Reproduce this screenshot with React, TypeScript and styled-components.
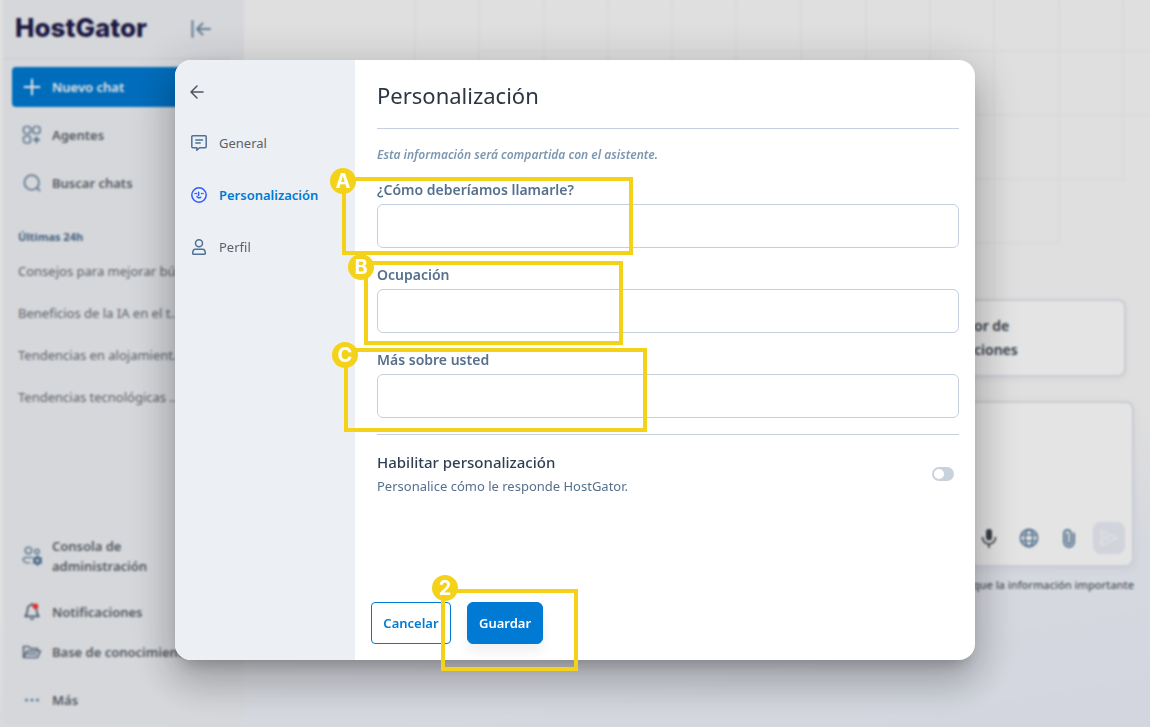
import React from "react";
import styled, { createGlobalStyle } from "styled-components";

const GlobalStyle = createGlobalStyle`
  *, *::before, *::after { box-sizing: border-box; }
  html, body { margin: 0; }
  body {
    font-family: "Noto Sans", "Open Sans", sans-serif;
    font-size: 13px;
    color: #4a5560;
    background: #fafafa;
  }
  button, input { font: inherit; }
  button { cursor: pointer; }
  h1, h2, h3, p, ul { margin: 0; padding: 0; }
  ul { list-style: none; }
`;

const blue = "#007ad3";
const marker = "#f4d219";

/* ---------- Page behind the dialog ---------- */

const Page = styled.div`
  position: relative;
  display: flex;
  min-height: 100vh;
  padding: 0 0 2px 3px;
  overflow: hidden;
  background: linear-gradient(170deg, #fafafa 0%, #fafafa 66%, #f1f3fa 78%, #ecf0fa 100%);
`;

const GridLines = styled.svg`
  position: absolute;
  top: 0;
  right: 0;
  stroke: #f4f4f4;
  stroke-width: 2;
  fill: none;
`;

const Sidebar = styled.aside`
  position: relative;
  display: flex;
  flex-direction: column;
  width: 241px;
  flex: none;
  border-radius: 0 0 8px 8px;
  background: #eff1f5;
`;

const SideHeader = styled.header`
  display: flex;
  align-items: center;
  justify-content: space-between;
  height: 59px;
  margin-right: 14px;
  padding: 0 19px 0 12px;
  border-bottom: 1px solid #dfe1e8;
`;

const Logo = styled.span`
  font-family: Inter, sans-serif;
  font-size: 26px;
  font-weight: 800;
  line-height: 32px;
  padding-bottom: 2px;
  color: #1f1c4b;
`;

const PlainButton = styled.button`
  display: flex;
  align-items: center;
  padding: 0;
  border: 0;
  background: none;
  color: #6f8ba5;
`;

const NewChat = styled.button`
  display: flex;
  align-items: center;
  gap: 10px;
  height: 40px;
  margin: 8px 14px 4px 9px;
  padding: 0 10px;
  border: 0;
  border-radius: 4px;
  background: ${blue};
  color: #fff;
  font-weight: 600;
`;

const SideLink = styled.a<{ $compact?: boolean }>`
  display: flex;
  align-items: center;
  gap: 10px;
  height: ${(p) => (p.$compact ? 40 : 48)}px;
  padding: 0 20px 0 19px;
  color: #5f666e;
  font-weight: 600;
  line-height: 20px;
  text-decoration: none;
  white-space: nowrap;

  svg { flex: none; color: #6f8ba5; }
`;

const HistoryTitle = styled.h3`
  margin: 20px 0 6px 15px;
  font-size: 11px;
  line-height: 20px;
  font-weight: 700;
  color: #4f6f90;
`;

const HistoryLink = styled.a`
  display: block;
  height: 42px;
  padding-left: 15px;
  line-height: 36px;
  color: #6a6f75;
  text-decoration: none;
  white-space: nowrap;
`;

const SideFooter = styled.nav`
  margin-top: auto;
  padding-bottom: 1px;
`;

const FooterGroup = styled.div`
  margin: 12px 0 4px;
`;

const Main = styled.main`
  position: relative;
  flex: 1;
  display: flex;
  flex-direction: column;
  align-items: flex-end;
  padding: 299px 16px 0 24px;
`;

const Suggestion = styled.button`
  width: 168px;
  height: 78px;
  margin-right: 8px;
  padding: 0 14px;
  border: 2px solid #e1e5ec;
  border-radius: 8px;
  background: #fff;
  box-shadow: 0 2px 6px rgba(60, 80, 110, 0.08);
  color: #3d4650;
  font-size: 14px;
  font-weight: 600;
  line-height: 24px;
  text-align: left;
`;

const Composer = styled.section`
  display: flex;
  align-items: flex-end;
  justify-content: flex-end;
  gap: 20px;
  width: 100%;
  height: 166px;
  margin-top: 24px;
  padding: 11px 7px;
  border: 2px solid #e1e5ec;
  border-radius: 8px;
  background: #fff;
  box-shadow: 0 2px 8px rgba(60, 80, 110, 0.08);
`;

const ComposerButton = styled.button`
  display: flex;
  align-items: center;
  justify-content: center;
  width: 20px;
  height: 32px;
  padding: 0;
  border: 0;
  background: none;
  color: #6484a3;

  &:first-child { color: #3f4750; }
`;

const SendButton = styled(ComposerButton)`
  width: 32px;
  margin-left: -6px;
  border-radius: 8px;
  background: #ebedf6;
  color: #fafbff;
`;

const Disclaimer = styled.p`
  margin-top: 8px;
  font-size: 11px;
  font-weight: 500;
  line-height: 20px;
  color: #56616e;
`;

/* ---------- Dialog ---------- */

const Backdrop = styled.div`
  position: fixed;
  inset: 0;
  display: flex;
  align-items: flex-start;
  justify-content: center;
  padding: 60px 16px;
  background: rgba(0, 0, 0, 0.105);
  backdrop-filter: blur(1px);
`;

const Dialog = styled.section`
  position: relative;
  display: flex;
  width: 100%;
  max-width: 800px;
  min-height: 600px;
  border-radius: 16px;
  background: #fff;
  box-shadow:
    0 11px 15px -7px rgba(0, 0, 0, 0.2),
    0 24px 38px 3px rgba(0, 0, 0, 0.14),
    0 9px 46px 8px rgba(0, 0, 0, 0.16);
`;

const DialogNav = styled.nav`
  width: 180px;
  flex: none;
  padding: 20px 0 0 15px;
  border-radius: 16px 0 0 16px;
  background: #ecf0f4;
`;

const BackButton = styled(PlainButton)`
  height: 24px;
  margin-bottom: 13px;
  color: #50555c;
`;

const NavLink = styled.a<{ $active?: boolean }>`
  display: flex;
  align-items: center;
  gap: 12px;
  height: 52px;
  padding-left: 1px;
  color: ${(p) => (p.$active ? blue : "#5c6167")};
  font-weight: ${(p) => (p.$active ? 600 : 400)};
  text-decoration: none;

  svg { color: ${(p) => (p.$active ? "#2f5bff" : "#4f7195")}; }
`;

const Form = styled.form`
  flex: 1;
  display: flex;
  flex-direction: column;
  padding: 15px 16px 16px 22px;
`;

const Title = styled.h2`
  height: 54px;
  border-bottom: 1px solid #c5cfdd;
  color: #2c3642;
  font-size: 22px;
  font-weight: 400;
  line-height: 40px;
`;

const Note = styled.p`
  margin: 16px 0 15px;
  color: #7d97b0;
  font-size: 12px;
  font-style: italic;
  font-weight: 600;
  line-height: 20px;
`;

const Fields = styled.div`
  display: flex;
  flex-direction: column;
  gap: 17px;
  margin-bottom: 16px;
`;

const Field = styled.div`
  display: flex;
  flex-direction: column;
  gap: 4px;
`;

const Label = styled.label`
  color: #56718e;
  font-size: 14px;
  font-weight: 600;
  line-height: 20px;
`;

const TextInput = styled.input`
  width: 100%;
  height: 44px;
  padding: 0 12px;
  border: 1px solid #c5cfdd;
  border-radius: 6px;
  background: #fff;
  color: #2c3642;
`;

const EnableRow = styled.div`
  display: flex;
  align-items: center;
  justify-content: space-between;
  padding: 15px 5px 0 0;
  border-top: 1px solid #c5cfdd;
`;

const EnableTitle = styled.label`
  display: block;
  color: #2f3f50;
  font-size: 15px;
  font-weight: 500;
  line-height: 24px;
`;

const EnableText = styled.p`
  color: #56708c;
  line-height: 24px;
`;

const Toggle = styled.input`
  appearance: none;
  display: flex;
  align-items: center;
  width: 22px;
  height: 14px;
  margin: 0;
  padding: 2px;
  border-radius: 7px;
  background: #c9d2dc;
  cursor: pointer;

  &::before {
    content: "";
    width: 10px;
    height: 10px;
    border-radius: 50%;
    background: #fff;
  }

  &:checked { background: ${blue}; justify-content: flex-end; }
`;

const Actions = styled.footer`
  display: flex;
  gap: 16px;
  margin: auto 0 0 -6px;
`;

const ActionButton = styled.button<{ $primary?: boolean }>`
  height: 42px;
  width: ${(p) => (p.$primary ? 76 : 80)}px;
  padding: 0;
  border: 1px solid ${blue};
  border-radius: ${(p) => (p.$primary ? 6 : 4)}px;
  background: ${(p) => (p.$primary ? blue : "#fff")};
  box-shadow: ${(p) => (p.$primary ? "0 8px 12px rgba(0, 0, 0, 0.06)" : "none")};
  color: ${(p) => (p.$primary ? "#fff" : blue)};
  font-weight: 600;
`;

/* ---------- Call-outs over the dialog ---------- */

const Callout = styled.div<{ $x: number; $y: number; $w: number; $h: number }>`
  position: absolute;
  left: ${(p) => p.$x}px;
  top: ${(p) => p.$y}px;
  width: ${(p) => p.$w}px;
  height: ${(p) => p.$h}px;
  border: 4px solid ${marker};
  pointer-events: none;
`;

const CalloutBadge = styled.span<{ $x: number; $y: number }>`
  position: absolute;
  left: ${(p) => p.$x}px;
  top: ${(p) => p.$y}px;
  width: 26px;
  height: 26px;
  border-radius: 50%;
  background: ${marker};
  color: #fff;
  font-family: Inter, sans-serif;
  font-size: 20px;
  font-weight: 700;
  line-height: 26px;
  text-align: center;
`;

const callouts = [
  { id: "A", x: 167, y: 117, w: 291, h: 78, bx: -16, by: -13 },
  { id: "B", x: 189, y: 201, w: 259, h: 84, bx: -20, by: -11 },
  { id: "C", x: 169, y: 288, w: 303, h: 84, bx: -16, by: -10 },
  { id: "2", x: 266, y: 529, w: 137, h: 82, bx: -13, by: -18 },
];

/* ---------- Icons ---------- */

const Icon = ({ size = 20, width = 1.5, box = 20, children }: { size?: number; width?: number; box?: number; children: React.ReactNode }) => (
  <svg width={size} height={size} viewBox={`0 0 ${box} ${box}`} fill="none" stroke="currentColor" strokeWidth={width} strokeLinecap="round" strokeLinejoin="round" aria-hidden="true">
    {children}
  </svg>
);

const CollapseIcon = () => (
  <Icon width={2}><path d="M1.500 2v16M19 10H6M11.500 4.500L6 10l5.500 5.500" /></Icon>
);
const PlusIcon = () => <Icon width={2}><path d="M10 2.500v15M2.500 10h15" /></Icon>;
const AgentsIcon = () => (
  <Icon width={1.7}>
    <rect x="1.500" y="1.500" width="7" height="7" rx="2.500" />
    <rect x="11" y="1.500" width="7" height="7" rx="2.500" />
    <rect x="1.500" y="11" width="7" height="7" rx="2.500" />
    <path d="M14.500 11l1.200 2.500 2.500 1.200-2.500 1.200-1.200 2.500-1.200-2.500-2.500-1.200 2.500-1.200z" fill="currentColor" stroke="none" />
    <path d="M14.500 12v5.500M11.800 14.700h5.500" />
  </Icon>
);
const SearchIcon = () => (
  <Icon width={1.8}><circle cx="9.700" cy="9.500" r="7.300" /><path d="M15 15l2.500 2.500" /></Icon>
);
const AdminIcon = () => (
  <Icon width={1.6}>
    <circle cx="6.500" cy="4.500" r="3.200" />
    <circle cx="15" cy="5.500" r="2.200" />
    <path d="M9.500 11.500H3.500a2.500 2.500 0 0 0-2.300 2.500c.3 2 3 3 6.300 3" />
    <circle cx="15.500" cy="14.500" r="2.800" strokeWidth="2.600" stroke="#52779c" />
    <path d="M15.500 10.200v1M15.500 18v1M11.700 12.400l.8.500M18.500 16.200l.8.500M11.700 16.700l.8-.5M18.500 12.900l.8-.5" strokeWidth="2" stroke="#52779c" />
  </Icon>
);
const BellIcon = () => (
  <Icon width={1.7}>
    <path d="M10 3c-3 0-4.500 2.200-4.500 4.800 0 3.500-1 5-2.300 6.500h13.600c-1.300-1.500-2.300-3-2.300-6.500C14.500 5.200 13 3 10 3zM10 1.500V3M8.800 17h2.400" stroke="#52667c" />
    <circle cx="13.500" cy="4.200" r="2.800" fill="#ff2f33" stroke="none" />
  </Icon>
);
const FolderIcon = () => (
  <Icon width={1.6}>
    <path d="M1.500 15.500v-11h5l2 2h7v2.500M1.500 15.500l3.500-6.500h13.500l-3 6.500zM5.500 12h9" stroke="#5d7186" />
  </Icon>
);
const DotsIcon = () => (
  <Icon>
    <g fill="currentColor" stroke="none">
      <circle cx="4.500" cy="10" r="1.600" /><circle cx="10" cy="10" r="1.600" /><circle cx="15.500" cy="10" r="1.600" />
    </g>
  </Icon>
);
const MicIcon = () => (
  <Icon width={1.7}>
    <rect x="7" y="1" width="6" height="11.500" rx="3" fill="currentColor" stroke="none" />
    <path d="M3.500 9.500a6.500 6.500 0 0 0 13 0M10 16v3.500" />
  </Icon>
);
const GlobeIcon = () => (
  <Icon width={1.8}>
    <circle cx="10" cy="10" r="8.500" /><ellipse cx="10" cy="10" rx="3.800" ry="8.500" />
    <path d="M2.500 7h15M2.500 13h15" strokeWidth="1.500" />
  </Icon>
);
const ClipIcon = () => (
  <Icon width={2}>
    <path d="M12 5.500v8.500a2 2 0 0 1-4 0V6M15 5.500V14a5 5 0 0 1-10 0V5.500a3.500 3.500 0 0 1 7 0" />
  </Icon>
);
const SendIcon = () => (
  <Icon width={1.8}><path d="M2 2.500L18.500 10 2 17.500V12l8-2-8-2z" /></Icon>
);
const ArrowLeftIcon = () => (
  <Icon size={14} box={14} width={1.5}><path d="M13 7H1M7 1L1 7l6 6" /></Icon>
);
const CommentIcon = () => (
  <Icon size={16} box={16} width={1.5}>
    <path d="M1.800 .8h12.400a1 1 0 0 1 1 1v10a1 1 0 0 1-1 1H8.500L5.800 15.200V12.800h-4a1 1 0 0 1-1-1v-10a1 1 0 0 1 1-1zM4.800 5h6.700M4.800 8h4.400" />
  </Icon>
);
const FaceIcon = () => (
  <Icon size={16} box={16} width={1.5}>
    <circle cx="8" cy="8" r="7.200" />
    <path d="M7.600 5.300v3.200M6 9.500c.6 1.400 2.200 1.700 3.700 .9" />
    <path d="M4 6.500h.1M5.400 6.500h.1M10.500 6.500h.1M12 6.500h.1" strokeWidth="1.400" />
  </Icon>
);
const UserIcon = () => (
  <Icon size={16} box={16} width={1.5}>
    <circle cx="8" cy="4.300" r="3.500" />
    <path d="M4.300 10.300h7.400c1.700 0 2.600 2 2.600 4.300a.6.600 0 0 1-.6.600H2.300a.6.600 0 0 1-.6-.6c0-2.300.9-4.300 2.600-4.300z" />
  </Icon>
);

const history = [
  "Consejos para mejorar bú...",
  "Beneficios de la IA en el t...",
  "Tendencias en alojamient...",
  "Tendencias tecnológicas ...",
];

const fields = [
  { id: "name", label: "¿Cómo deberíamos llamarle?" },
  { id: "job", label: "Ocupación" },
  { id: "about", label: "Más sobre usted" },
];

export default function App() {
  return (
    <>
      <GlobalStyle />
      <Page>
        <GridLines width="906" height="300" aria-hidden="true">
          <path d="M171 0V115M235 0V115M300 0V115M364 0V115M428 0V115M492 0V300M557 0V300M622 0V300M686 0V300M750 0V300M815 0V243M879 0V182M235 51H906M492 115H906M492 179H882M492 243H815" />
        </GridLines>
        <Sidebar>
          <SideHeader>
            <Logo>HostGator</Logo>
            <PlainButton aria-label="Contraer menú"><CollapseIcon /></PlainButton>
          </SideHeader>
          <NewChat><PlusIcon />Nuevo chat</NewChat>
          <SideLink href="#agentes"><AgentsIcon />Agentes</SideLink>
          <SideLink href="#buscar"><SearchIcon />Buscar chats</SideLink>
          <HistoryTitle>Últimas 24h</HistoryTitle>
          {history.map((text) => (
            <HistoryLink key={text} href="#chat">{text}</HistoryLink>
          ))}
          <SideFooter>
            <SideLink href="#consola"><AdminIcon /><span>Consola de<br />administración</span></SideLink>
            <FooterGroup>
              <SideLink href="#avisos" $compact><BellIcon />Notificaciones</SideLink>
              <SideLink href="#base" $compact><FolderIcon />Base de conocimiento</SideLink>
            </FooterGroup>
            <SideLink href="#mas"><DotsIcon />Más</SideLink>
          </SideFooter>
        </Sidebar>
        <Main>
          <Suggestion>or de<br />ciones</Suggestion>
          <Composer>
            <ComposerButton aria-label="Dictar"><MicIcon /></ComposerButton>
            <ComposerButton aria-label="Buscar en la web"><GlobeIcon /></ComposerButton>
            <ComposerButton aria-label="Adjuntar"><ClipIcon /></ComposerButton>
            <SendButton aria-label="Enviar"><SendIcon /></SendButton>
          </Composer>
          <Disclaimer>que la información importante</Disclaimer>
        </Main>
      </Page>
      <Backdrop>
        <Dialog role="dialog" aria-labelledby="dialog-title">
          <DialogNav>
            <BackButton aria-label="Volver"><ArrowLeftIcon /></BackButton>
            <NavLink href="#general"><CommentIcon />General</NavLink>
            <NavLink href="#personalizacion" $active><FaceIcon />Personalización</NavLink>
            <NavLink href="#perfil"><UserIcon />Perfil</NavLink>
          </DialogNav>
          <Form onSubmit={(e) => e.preventDefault()}>
            <Title id="dialog-title">Personalización</Title>
            <Note>Esta información será compartida con el asistente.</Note>
            <Fields>
              {fields.map((f) => (
                <Field key={f.id}>
                  <Label htmlFor={f.id}>{f.label}</Label>
                  <TextInput id={f.id} type="text" />
                </Field>
              ))}
            </Fields>
            <EnableRow>
              <div>
                <EnableTitle htmlFor="enable">Habilitar personalización</EnableTitle>
                <EnableText>Personalice cómo le responde HostGator.</EnableText>
              </div>
              <Toggle id="enable" type="checkbox" role="switch" />
            </EnableRow>
            <Actions>
              <ActionButton type="button">Cancelar</ActionButton>
              <ActionButton type="submit" $primary>Guardar</ActionButton>
            </Actions>
          </Form>
          {callouts.map((c) => (
            <Callout key={c.id} $x={c.x} $y={c.y} $w={c.w} $h={c.h}>
              <CalloutBadge $x={c.bx} $y={c.by}>{c.id}</CalloutBadge>
            </Callout>
          ))}
        </Dialog>
      </Backdrop>
    </>
  );
}
